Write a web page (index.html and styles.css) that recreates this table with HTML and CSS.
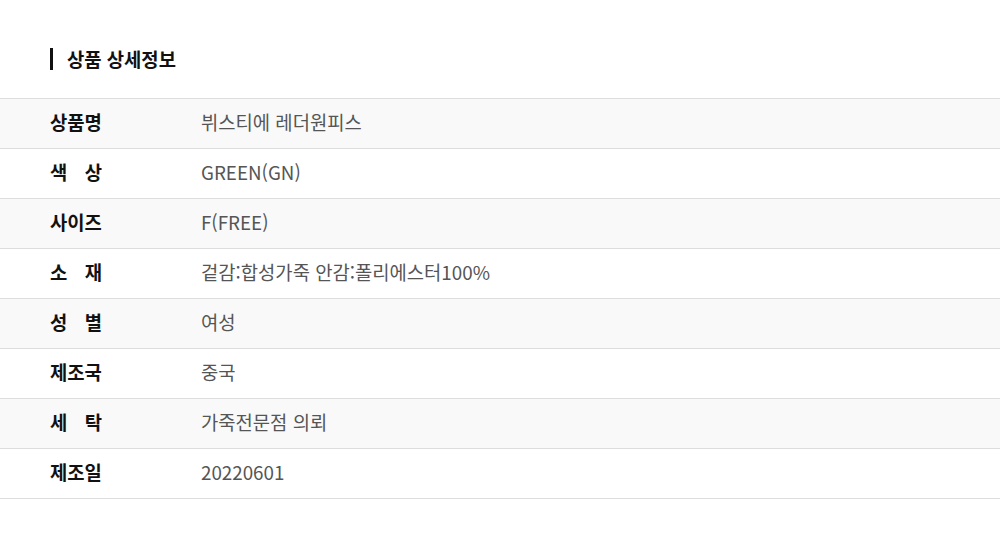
FILE: index.html
```html
<!DOCTYPE html>
<html lang="ko">
<head>
<meta charset="UTF-8">
<meta name="viewport" content="width=device-width, initial-scale=1.0">
<title>상품 상세정보</title>
<link rel="stylesheet" href="styles.css">
</head>
<body>
  <div class="detail-container">
    <h2 class="detail-title">상품 상세정보</h2>
    <table class="detail-table">
      <tr><th><span class="label">상품명</span></th><td>뷔스티에 레더원피스</td></tr>
      <tr><th><span class="label">색 상</span></th><td>GREEN(GN)</td></tr>
      <tr><th><span class="label">사이즈</span></th><td>F(FREE)</td></tr>
      <tr><th><span class="label">소 재</span></th><td>겉감:합성가죽 안감:폴리에스터100%</td></tr>
      <tr><th><span class="label">성 별</span></th><td>여성</td></tr>
      <tr><th><span class="label">제조국</span></th><td>중국</td></tr>
      <tr><th><span class="label">세 탁</span></th><td>가죽전문점 의뢰</td></tr>
      <tr><th><span class="label">제조일</span></th><td>20220601</td></tr>
    </table>
  </div>
</body>
</html>
```

FILE: styles.css
```css
body {
  margin: 0;
  background: #fff;
  font-family: "Noto Sans CJK KR", "Noto Sans", sans-serif;
  color: #111;
}
.detail-container {
  padding-top: 48px;
}
.detail-title {
  margin: 0 0 0 50px;
  padding-left: 14px;
  border-left: 3px solid #111;
  font-size: 18.8px;
  font-weight: 700;
  line-height: 22px;
  height: 22px;
  display: flex;
  align-items: center;
}
.detail-table {
  width: 100%;
  margin-top: 28px;
  border-collapse: collapse;
  border-top: 1px solid #ddd;
}
.detail-table tr {
  height: 50px;
  border-bottom: 1px solid #ddd;
}
.detail-table tr:nth-child(odd) {
  background: #f9f9f9;
}
.detail-table th,
.detail-table td {
  padding: 0 0 3px 0;
  line-height: 24px;
  font-size: 18.8px;
}
.detail-table th {
  width: 151px;
  padding-left: 50px;
  text-align: left;
  font-weight: 700;
  color: #111;
}
.label {
  display: inline-block;
  width: 52px;
  text-align: justify;
  text-align-last: justify;
}
.detail-table td {
  color: #555;
}
```
